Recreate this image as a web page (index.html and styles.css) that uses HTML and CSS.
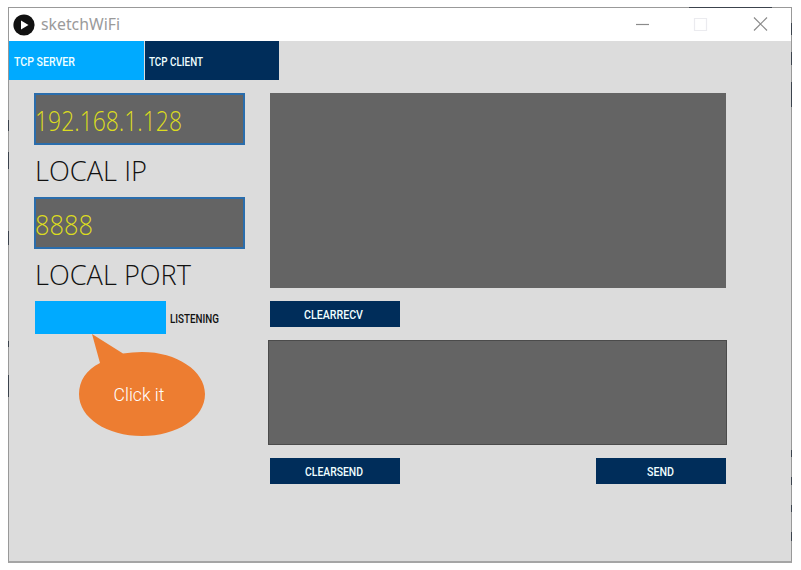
FILE: index.html
```html
<!DOCTYPE html>
<html lang="en">
<head>
<meta charset="utf-8">
<title>sketchWiFi</title>
<link rel="stylesheet" href="styles.css">
</head>
<body>
<div class="window">
  <svg class="edges" width="784" height="556"><path d="M681 .5H764M.5 113V124M.5 145V162M.5 224V238M.5 334V340M.5 368V390M783.500 16V28M783.500 45V58M783.500 75V100M783.500 443V450M783.500 470V478M783.500 498V505M783.500 525V534"/></svg>
  <header class="titlebar">
    <svg class="logo" width="22" height="22" viewBox="0 0 22 22"><circle cx="11" cy="11" r="10.6"/><path d="M8 6.500 15.500 11 8 15.500Z"/></svg>
    <svg class="title" width="90" height="24"><text x="1" y="16.500" textLength="79" lengthAdjust="spacingAndGlyphs">sketchWiFi</text></svg>
    <svg class="controls" width="134" height="16" viewBox="0 0 134 16"><path class="line" d="M1 7.500H14"/><path class="box" d="M59.500 1.500H71.500V13.500H59.500Z"/><path class="line" d="M119 .5 132 13.500M132 .5 119 13.500"/></svg>
  </header>
  <nav class="tabs">
    <div class="tab active"><svg class="pixel" width="130" height="20"><text x="5" y="14.500" textLength="61" lengthAdjust="spacingAndGlyphs">TCP SERVER</text></svg></div>
    <div class="tab"><svg class="pixel" width="130" height="20"><text x="4" y="14.500" textLength="54" lengthAdjust="spacingAndGlyphs">TCP CLIENT</text></svg></div>
  </nav>
  <main class="content">
    <section class="settings">
      <div class="field"><svg class="large" width="200" height="48"><text x="-1" y="36" textLength="147" lengthAdjust="spacingAndGlyphs">192.168.1.128</text></svg></div>
      <div class="caption"><svg class="large" width="200" height="52"><text x="-1" y="35.500" textLength="112" lengthAdjust="spacingAndGlyphs">LOCAL IP</text></svg></div>
      <div class="field"><svg class="large" width="200" height="48"><text x="-1" y="36" textLength="58" lengthAdjust="spacingAndGlyphs">8888</text></svg></div>
      <div class="caption"><svg class="large" width="200" height="52"><text x="-1" y="35.500" textLength="156" lengthAdjust="spacingAndGlyphs">LOCAL PORT</text></svg></div>
      <div class="listen">
        <div class="toggle"></div>
        <svg class="pixel dark" width="70" height="20"><text x="4" y="14.500" textLength="49" lengthAdjust="spacingAndGlyphs">LISTENING</text></svg>
        <svg class="callout" width="128" height="104" viewBox="0 0 128 104"><path d="M14 0 22 29 C8 36 1 47 1 60 C1 84 29 102 64 102 C99 102 127 84 127 60 C127 37 99 18 64 18 Q54 18 45 19.500Z"/><text x="35.500" y="66.500" textLength="51" lengthAdjust="spacingAndGlyphs">Click it</text></svg>
      </div>
    </section>
    <section class="messages">
      <div class="receive"></div>
      <div class="actions first">
        <div class="button"><svg class="pixel" width="130" height="20"><text x="34" y="15" textLength="59" lengthAdjust="spacingAndGlyphs">CLEARRECV</text></svg></div>
      </div>
      <div class="compose"></div>
      <div class="actions">
        <div class="button"><svg class="pixel" width="130" height="20"><text x="35" y="14.500" textLength="58" lengthAdjust="spacingAndGlyphs">CLEARSEND</text></svg></div>
        <div class="button"><svg class="pixel" width="130" height="20"><text x="51" y="14.500" textLength="27" lengthAdjust="spacingAndGlyphs">SEND</text></svg></div>
      </div>
    </section>
  </main>
</div>
</body>
</html>
```
FILE: styles.css
```css
* { box-sizing: border-box; }
body { margin: 0; padding: 7px 0 0 8px; background: #fff; }
svg { display: block; flex: none; }
.window { position: relative; width: 784px; height: 556px; border: 1px solid #999; border-bottom: 2px solid #a5a5a5; background: #dcdcdc; }
.edges { position: absolute; left: -1px; top: -1px; fill: none; stroke: #3c434d; pointer-events: none; }
.titlebar { height: 33px; display: flex; align-items: center; background: #fff; padding: 0 22px 0 4px; }
.logo circle { fill: #111; }
.logo path { fill: #fff; }
.title { margin-left: 5px; font: 16px "Noto Sans", sans-serif; fill: #9a9a9a; }
.controls { margin-left: auto; fill: none; stroke-width: 1.2; }
.line { stroke: #8b8b8b; }
.box { stroke: #ebebef; }
.tabs { display: flex; gap: 1px; }
.tab { width: 135px; height: 39px; display: flex; align-items: center; background: #002d5a; }
.tab + .tab { width: 134px; }
.tab.active { background: #00aaff; }
.pixel { font: 500 12.5px Roboto, sans-serif; fill: #f0ffff; }
.pixel.dark { fill: #111; }
.content { display: flex; padding: 13px 0 0 25px; }
.settings { width: 234px; }
.field { width: 211px; height: 52px; border: 2px solid #2a6dac; background: #646464; }
.large { font: 300 28px "Open Sans", sans-serif; fill: #111; overflow: visible; }
.field .large { fill: #dcdc20; }
.caption { height: 52px; padding-left: 2px; }
.listen { position: relative; display: flex; align-items: center; padding-left: 1px; }
.toggle { width: 131px; height: 33px; background: #00aaff; }
.callout { position: absolute; left: 44px; top: 33px; fill: #ed7d31; }
.callout text { font: 300 18px Roboto, sans-serif; fill: #fff; }
.messages { width: 459px; }
.receive { width: 456px; height: 195px; margin-left: 2px; background: #646464; }
.actions { display: flex; justify-content: space-between; padding: 0 1px 0 2px; margin-top: 13px; }
.button { width: 130px; height: 26px; display: flex; align-items: center; background: #002d5a; }
.compose { height: 105px; margin-top: 13px; border: 1px solid #4b4b4b; background: #646464; }
```
